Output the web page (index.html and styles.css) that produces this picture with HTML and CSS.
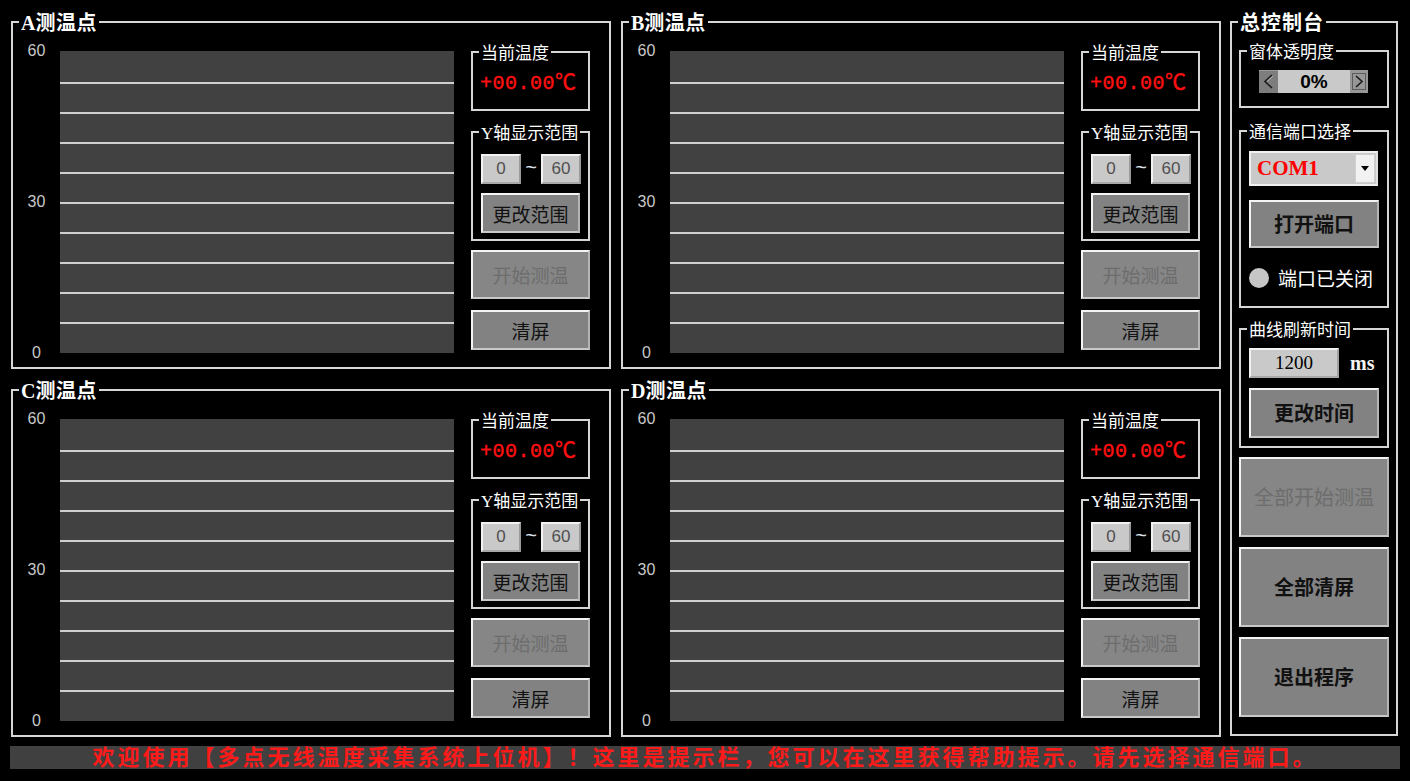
FILE: index.html
```html
<!DOCTYPE html>
<html lang="zh-CN">
<head>
  <meta charset="UTF-8">
  <title>多点无线温度采集系统上位机</title>
  <link rel="stylesheet" href="styles.css">
</head>
<body>
  <div class="main">
    <div class="grid">

      <section class="panel">
        <h2 class="panel-title"><b>A</b>测温点</h2>
        <div class="panel-body">
          <div class="axis"><span>60</span><span>30</span><span>0</span></div>
          <div class="chart"><i></i><i></i><i></i><i></i><i></i><i></i><i></i><i></i><i></i></div>
          <div class="ctrl">
            <div class="sub temp-box">
              <span class="sub-title">当前温度</span>
              <div class="temp">+00.00<span>℃</span></div>
            </div>
            <div class="sub range-box">
              <span class="sub-title"><b>Y</b>轴显示范围</span>
              <div class="range-row"><span class="field">0</span><span class="tilde">~</span><span class="field">60</span></div>
              <button class="btn btn-range">更改范围</button>
            </div>
            <button class="btn btn-start" disabled>开始测温</button>
            <button class="btn btn-clear">清屏</button>
          </div>
        </div>
      </section>

      <section class="panel">
        <h2 class="panel-title"><b>B</b>测温点</h2>
        <div class="panel-body">
          <div class="axis"><span>60</span><span>30</span><span>0</span></div>
          <div class="chart"><i></i><i></i><i></i><i></i><i></i><i></i><i></i><i></i><i></i></div>
          <div class="ctrl">
            <div class="sub temp-box">
              <span class="sub-title">当前温度</span>
              <div class="temp">+00.00<span>℃</span></div>
            </div>
            <div class="sub range-box">
              <span class="sub-title"><b>Y</b>轴显示范围</span>
              <div class="range-row"><span class="field">0</span><span class="tilde">~</span><span class="field">60</span></div>
              <button class="btn btn-range">更改范围</button>
            </div>
            <button class="btn btn-start" disabled>开始测温</button>
            <button class="btn btn-clear">清屏</button>
          </div>
        </div>
      </section>

      <section class="panel">
        <h2 class="panel-title"><b>C</b>测温点</h2>
        <div class="panel-body">
          <div class="axis"><span>60</span><span>30</span><span>0</span></div>
          <div class="chart"><i></i><i></i><i></i><i></i><i></i><i></i><i></i><i></i><i></i></div>
          <div class="ctrl">
            <div class="sub temp-box">
              <span class="sub-title">当前温度</span>
              <div class="temp">+00.00<span>℃</span></div>
            </div>
            <div class="sub range-box">
              <span class="sub-title"><b>Y</b>轴显示范围</span>
              <div class="range-row"><span class="field">0</span><span class="tilde">~</span><span class="field">60</span></div>
              <button class="btn btn-range">更改范围</button>
            </div>
            <button class="btn btn-start" disabled>开始测温</button>
            <button class="btn btn-clear">清屏</button>
          </div>
        </div>
      </section>

      <section class="panel">
        <h2 class="panel-title"><b>D</b>测温点</h2>
        <div class="panel-body">
          <div class="axis"><span>60</span><span>30</span><span>0</span></div>
          <div class="chart"><i></i><i></i><i></i><i></i><i></i><i></i><i></i><i></i><i></i></div>
          <div class="ctrl">
            <div class="sub temp-box">
              <span class="sub-title">当前温度</span>
              <div class="temp">+00.00<span>℃</span></div>
            </div>
            <div class="sub range-box">
              <span class="sub-title"><b>Y</b>轴显示范围</span>
              <div class="range-row"><span class="field">0</span><span class="tilde">~</span><span class="field">60</span></div>
              <button class="btn btn-range">更改范围</button>
            </div>
            <button class="btn btn-start" disabled>开始测温</button>
            <button class="btn btn-clear">清屏</button>
          </div>
        </div>
      </section>

    </div>

    <aside class="console">
      <h2 class="console-title">总控制台</h2>

      <div class="sub opacity-box">
        <span class="sub-title">窗体透明度</span>
        <div class="scroll">
          <span class="arrow arrow-left">
            <svg width="19" height="23" viewBox="0 0 19 23"><polyline points="13,5 6,11.5 13,18" fill="none" stroke="#1a1a1a" stroke-width="1.6"/><polyline points="14,6 8,11.5" fill="none" stroke="#bdbdbd" stroke-width="1"/></svg>
          </span>
          <span class="scroll-value">0%</span>
          <span class="arrow arrow-right">
            <svg width="18" height="23" viewBox="0 0 18 23"><rect x="2.5" y="3.5" width="13" height="16" fill="none" stroke="#222" stroke-width="1" stroke-dasharray="1 1"/><polyline points="6,6 12,11.5 6,17" fill="none" stroke="#1a1a1a" stroke-width="1.6"/></svg>
          </span>
        </div>
      </div>

      <div class="sub port-box">
        <span class="sub-title">通信端口选择</span>
        <div class="combo">
          <span class="combo-value">COM1</span>
          <span class="combo-btn"><svg width="8" height="5" viewBox="0 0 8 5"><polygon points="0,0 8,0 4,5" fill="#000"/></svg></span>
        </div>
        <button class="btn btn-open">打开端口</button>
        <div class="radio-row"><span class="led"></span><span class="radio-text">端口已关闭</span></div>
      </div>

      <div class="sub refresh-box">
        <span class="sub-title">曲线刷新时间</span>
        <div class="time-row"><span class="time-field">1200</span><span class="unit">ms</span></div>
        <button class="btn btn-time">更改时间</button>
      </div>

      <button class="btn btn-big" disabled>全部开始测温</button>
      <button class="btn btn-big btn-bold">全部清屏</button>
      <button class="btn btn-big btn-bold">退出程序</button>
    </aside>
  </div>

  <div class="status">欢迎使用【多点无线温度采集系统上位机】！这里是提示栏，您可以在这里获得帮助提示。请先选择通信端口。</div>
</body>
</html>
```

FILE: styles.css
```css
/* Page */
* {
  box-sizing: border-box;
}

body {
  margin: 0;
  width: 1410px;
  height: 781px;
  overflow: hidden;
  background-color: #000;
  color: #fff;
  font-family: "Noto Sans CJK SC", sans-serif;
}

.main {
  display: flex;
  padding: 21px 0 0 11px;
}

.grid {
  display: grid;
  grid-template-columns: 600px 600px;
  grid-template-rows: 348px 348px;
  column-gap: 10px;
  row-gap: 20px;
}

/* Group boxes */
.panel,
.console,
.sub {
  border: 2px solid #d6d6d6;
  display: flex;
  flex-direction: column;
  align-items: flex-start;
}

.panel-title,
.console-title {
  margin: -12px 0 0 6px;
  padding: 0 2px;
  background: #000;
  font-size: 20px;
  line-height: 22px;
  font-weight: bold;
  letter-spacing: 0.5px;
}

.panel-title b {
  font-family: "Liberation Serif", serif;
  letter-spacing: 0;
}

.sub-title {
  margin: -11px 0 0 6px;
  padding: 0 2px;
  background: #000;
  font-size: 17px;
  line-height: 20px;
  white-space: nowrap;
}

.sub-title b {
  font-family: "Liberation Serif", serif;
  font-weight: normal;
}

/* Chart panel */
.panel-body {
  display: flex;
  align-items: flex-start;
  margin-top: 17px;
}

.axis {
  width: 47px;
  height: 320px;
  margin-top: -9px;
  display: flex;
  flex-direction: column;
  justify-content: space-between;
  align-items: center;
  font-family: "Liberation Sans", sans-serif;
  font-size: 16px;
  line-height: 18px;
  color: #c8c8c8;
}

.chart {
  width: 394px;
  height: 302px;
  padding-top: 31px;
  background: #414141;
}

.chart i {
  display: block;
  height: 30px;
  border-top: 2px solid #cfcfcf;
}

.ctrl {
  width: 119px;
  margin-left: 17px;
  display: flex;
  flex-direction: column;
}

.temp-box {
  width: 119px;
  height: 60px;
}

.temp {
  margin: 6px 0 0 7px;
  color: #ff1010;
  font-family: "Liberation Mono", monospace;
  font-size: 20px;
  line-height: 24px;
  letter-spacing: 0.5px;
  -webkit-text-stroke: 0.4px #ff1010;
}

.temp span {
  font-family: "Noto Sans CJK SC", sans-serif;
  font-size: 21px;
}

.range-box {
  width: 119px;
  height: 110px;
  margin-top: 20px;
}

.range-row {
  display: flex;
  margin: 10px 0 0 8px;
}

.field {
  width: 40px;
  height: 30px;
  background: #c9c9c9;
  border: 2px solid;
  border-color: #f2f2f2 #9a9a9a #a8a8a8 #f2f2f2;
  color: #505050;
  font-family: "Liberation Sans", sans-serif;
  font-size: 17px;
  line-height: 26px;
  text-align: center;
}

.tilde {
  width: 20px;
  text-align: center;
  font-family: "Liberation Sans", sans-serif;
  font-size: 20px;
  line-height: 26px;
  color: #dfe4ee;
}

/* Buttons */
.btn {
  display: block;
  padding: 0;
  background: #828282;
  border: 2px solid;
  border-color: #f4f4f4 #b4b4b4 #c8c8c8 #f4f4f4;
  color: #111;
  font-family: "Noto Sans CJK SC", sans-serif;
  font-size: 19px;
  line-height: 1;
  cursor: pointer;
}

.btn:disabled {
  color: #6d6d6d;
  background: #868686;
  cursor: default;
}

.btn-range {
  width: 99px;
  height: 40px;
  margin: 9px 0 0 8px;
}

.btn-start {
  width: 119px;
  height: 49px;
  margin-top: 9px;
}

.btn-clear {
  width: 119px;
  height: 40px;
  margin-top: 11px;
}

/* Console */
.console {
  width: 168px;
  height: 715px;
  margin-left: 9px;
}

.console-title {
  margin-top: -13px;
  line-height: 24px;
  letter-spacing: 1px;
}

.console .sub {
  width: 150px;
  margin-left: 7px;
}

.opacity-box {
  height: 58px;
  margin-top: 16px;
}

.scroll {
  display: flex;
  width: 109px;
  height: 23px;
  margin: 9px 0 0 18px;
  background: #c9c9c9;
}

.arrow {
  display: block;
  width: 19px;
  height: 23px;
  background: #7d7d7d;
  border-top: 1px solid #9a9a9a;
}

.arrow svg {
  display: block;
  margin-top: -1px;
}

.arrow-right {
  width: 18px;
  background: #979797;
}

.scroll-value {
  flex: 1;
  text-align: center;
  color: #000;
  font-family: "Liberation Sans", sans-serif;
  font-weight: bold;
  font-size: 19px;
  line-height: 23px;
}

.port-box {
  height: 178px;
  margin-top: 22px;
}

.combo {
  display: flex;
  align-items: center;
  width: 129px;
  height: 35px;
  margin: 10px 0 0 8px;
  background: #c9c9c9;
  border: 2px solid;
  border-color: #f0f0f0 #e0e0e0 #f0f0f0 #f0f0f0;
}

.combo-value {
  flex: 1;
  padding-left: 6px;
  color: #ff0000;
  font-family: "Liberation Serif", serif;
  font-weight: bold;
  font-size: 21px;
}

.combo-btn {
  width: 20px;
  height: 29px;
  margin-right: 1px;
  background: #f2f2f2;
  border: 1px solid #d0d0d0;
  display: flex;
  align-items: center;
  justify-content: center;
}

.btn-open {
  width: 130px;
  height: 48px;
  margin: 14px 0 0 8px;
  font-size: 20px;
  font-weight: bold;
}

.radio-row {
  display: flex;
  align-items: center;
  margin: 20px 0 0 8px;
  height: 20px;
}

.led {
  width: 20px;
  height: 20px;
  border-radius: 50%;
  background: #c6c6c6;
}

.radio-text {
  margin-left: 9px;
  font-size: 19px;
  line-height: 20px;
}

.refresh-box {
  height: 120px;
  margin-top: 20px;
}

.time-row {
  display: flex;
  align-items: center;
  margin: 9px 0 0 8px;
}

.time-field {
  width: 90px;
  height: 30px;
  background: #c9c9c9;
  border: 2px solid;
  border-color: #f2f2f2 #a0a0a0 #a8a8a8 #f2f2f2;
  color: #000;
  font-family: "Liberation Serif", serif;
  font-size: 19px;
  line-height: 26px;
  text-align: center;
}

.unit {
  margin-left: 11px;
  font-family: "Liberation Serif", serif;
  font-weight: bold;
  font-size: 20px;
  color: #f4f4f4;
}

.btn-time {
  width: 130px;
  height: 50px;
  margin: 10px 0 0 8px;
  font-size: 20px;
  font-weight: bold;
}

.btn-big {
  width: 150px;
  height: 80px;
  margin: 10px 0 0 7px;
  font-size: 20px;
}

.btn-big:disabled {
  margin-top: 9px;
}

.btn-bold {
  font-weight: bold;
}

/* Hint bar */
.status {
  width: 1390px;
  height: 23px;
  margin: 9px 0 0 10px;
  background: #404040;
  color: #ff1a1a;
  font-family: "Liberation Serif", "Noto Sans CJK SC", serif;
  font-weight: bold;
  font-size: 22px;
  line-height: 23px;
  letter-spacing: 3px;
  text-align: center;
  white-space: nowrap;
  overflow: hidden;
}
```
